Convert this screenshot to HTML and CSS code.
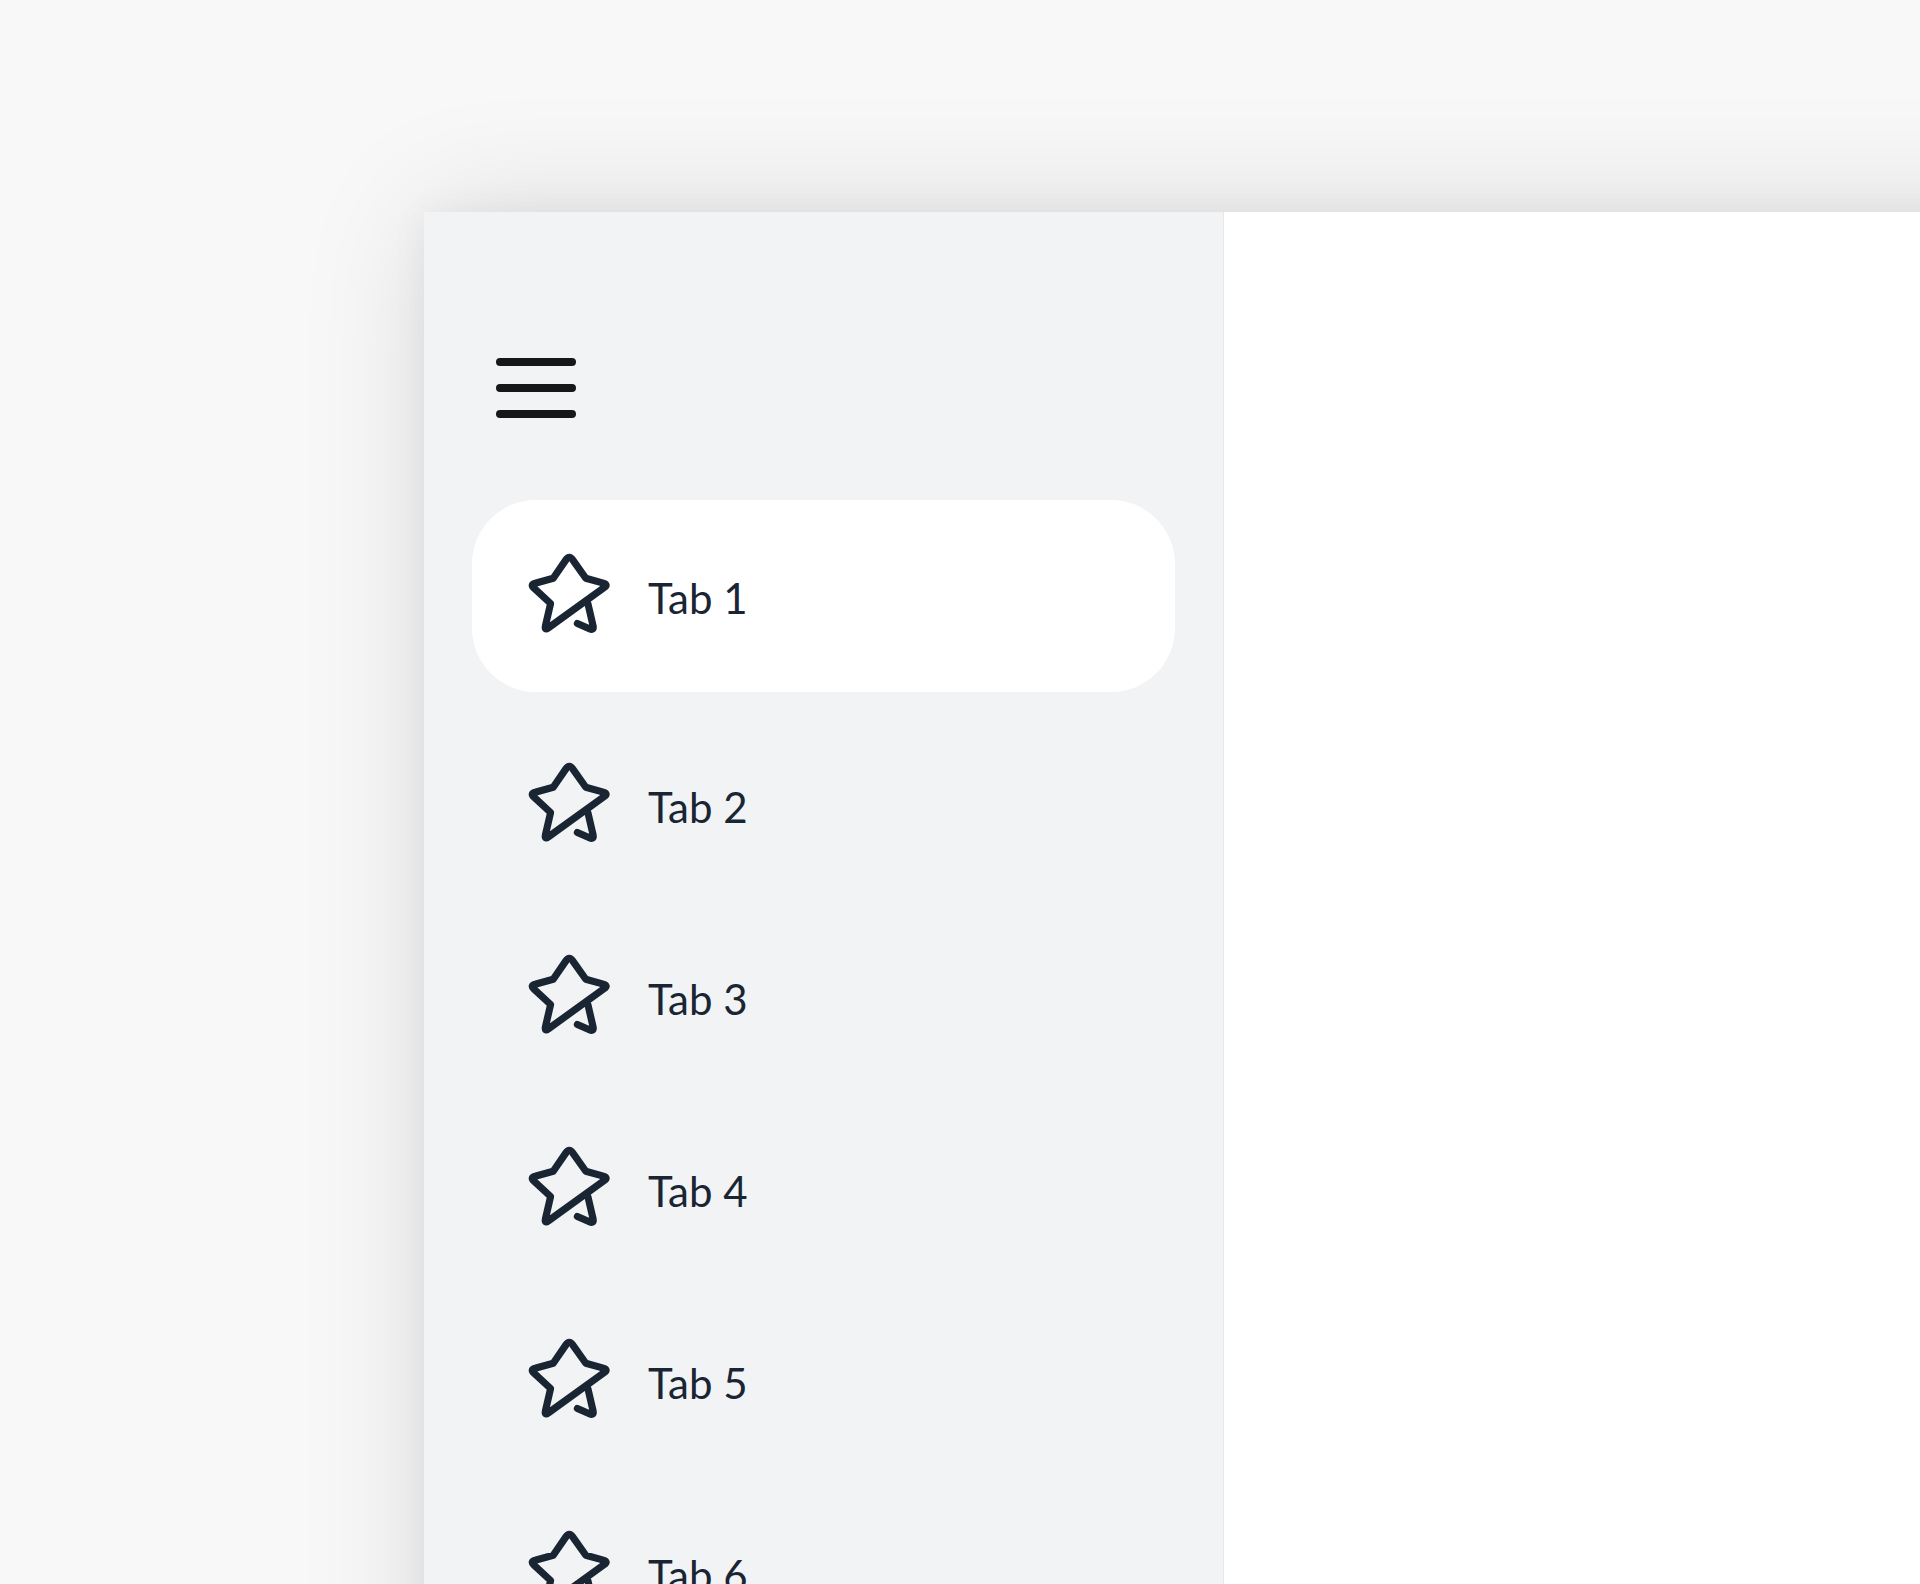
FILE: index.html
```html
<!DOCTYPE html>
<html lang="en">
<head>
<meta charset="utf-8">
<title>Tabs</title>
<link rel="stylesheet" href="styles.css">
</head>
<body>
<div class="stage">
  <div class="panel">
    <aside class="sidebar">
      <button class="menu-btn" aria-label="Menu">
        <span class="bar"></span>
        <span class="bar"></span>
        <span class="bar"></span>
      </button>
      <nav class="tabs">
        <a class="tab tab-active" href="#">
          <svg class="star" viewBox="0 0 96 96"><path transform="translate(48.3 45) scale(1.05) translate(-48.3 -45)" d="M45.2 13.2 Q48.3 8.6 51.4 13.2 L64 31 L80.7 35.6 Q85.7 37 81.4 39.9 L28.5 78.1 Q24.4 81.2 25.6 76.1 L30.5 55 L14.7 40.4 Q10.8 36.9 15.8 35.7 L33 31 Z M66 55 L70.9 76.1 Q72.1 81.2 67.4 79 L56 74"/></svg>
          <span class="label">Tab 1</span>
        </a>
        <a class="tab" href="#">
          <svg class="star" viewBox="0 0 96 96"><path transform="translate(48.3 45) scale(1.05) translate(-48.3 -45)" d="M45.2 13.2 Q48.3 8.6 51.4 13.2 L64 31 L80.7 35.6 Q85.7 37 81.4 39.9 L28.5 78.1 Q24.4 81.2 25.6 76.1 L30.5 55 L14.7 40.4 Q10.8 36.9 15.8 35.7 L33 31 Z M66 55 L70.9 76.1 Q72.1 81.2 67.4 79 L56 74"/></svg>
          <span class="label">Tab 2</span>
        </a>
        <a class="tab" href="#">
          <svg class="star" viewBox="0 0 96 96"><path transform="translate(48.3 45) scale(1.05) translate(-48.3 -45)" d="M45.2 13.2 Q48.3 8.6 51.4 13.2 L64 31 L80.7 35.6 Q85.7 37 81.4 39.9 L28.5 78.1 Q24.4 81.2 25.6 76.1 L30.5 55 L14.7 40.4 Q10.8 36.9 15.8 35.7 L33 31 Z M66 55 L70.9 76.1 Q72.1 81.2 67.4 79 L56 74"/></svg>
          <span class="label">Tab 3</span>
        </a>
        <a class="tab" href="#">
          <svg class="star" viewBox="0 0 96 96"><path transform="translate(48.3 45) scale(1.05) translate(-48.3 -45)" d="M45.2 13.2 Q48.3 8.6 51.4 13.2 L64 31 L80.7 35.6 Q85.7 37 81.4 39.9 L28.5 78.1 Q24.4 81.2 25.6 76.1 L30.5 55 L14.7 40.4 Q10.8 36.9 15.8 35.7 L33 31 Z M66 55 L70.9 76.1 Q72.1 81.2 67.4 79 L56 74"/></svg>
          <span class="label">Tab 4</span>
        </a>
        <a class="tab" href="#">
          <svg class="star" viewBox="0 0 96 96"><path transform="translate(48.3 45) scale(1.05) translate(-48.3 -45)" d="M45.2 13.2 Q48.3 8.6 51.4 13.2 L64 31 L80.7 35.6 Q85.7 37 81.4 39.9 L28.5 78.1 Q24.4 81.2 25.6 76.1 L30.5 55 L14.7 40.4 Q10.8 36.9 15.8 35.7 L33 31 Z M66 55 L70.9 76.1 Q72.1 81.2 67.4 79 L56 74"/></svg>
          <span class="label">Tab 5</span>
        </a>
        <a class="tab" href="#">
          <svg class="star" viewBox="0 0 96 96"><path transform="translate(48.3 45) scale(1.05) translate(-48.3 -45)" d="M45.2 13.2 Q48.3 8.6 51.4 13.2 L64 31 L80.7 35.6 Q85.7 37 81.4 39.9 L28.5 78.1 Q24.4 81.2 25.6 76.1 L30.5 55 L14.7 40.4 Q10.8 36.9 15.8 35.7 L33 31 Z M66 55 L70.9 76.1 Q72.1 81.2 67.4 79 L56 74"/></svg>
          <span class="label">Tab 6</span>
        </a>
      </nav>
    </aside>
    <main class="content"></main>
  </div>
</div>
</body>
</html>
```
FILE: styles.css
```css
html, body {
  margin: 0;
  padding: 0;
}
body {
  width: 1920px;
  height: 1584px;
  overflow: hidden;
  background: #f8f8f8;
  font-family: Lato, "Noto Sans", sans-serif;
}
.stage {
  padding: 212px 0 0 424px;
}
.panel {
  display: flex;
  width: 1700px;
  height: 1600px;
  background: #ffffff;
  box-shadow: 0 0 120px rgba(0, 0, 0, 0.12), 0 0 36px rgba(0, 0, 0, 0.05);
}
.sidebar {
  box-sizing: border-box;
  width: 800px;
  flex: none;
  background: #f2f3f5;
  border-right: 1px solid #e6e7e9;
  padding: 146px 48px 0 48px;
}
.menu-btn {
  display: flex;
  flex-direction: column;
  gap: 18px;
  width: 80px;
  padding: 0;
  margin: 0 0 82px 24px;
  border: 0;
  background: transparent;
}
.bar {
  display: block;
  width: 80px;
  height: 8px;
  border-radius: 4px;
  background: #171717;
}
.tabs {
  display: flex;
  flex-direction: column;
}
.tab {
  display: flex;
  align-items: center;
  gap: 31px;
  height: 192px;
  padding-left: 49px;
  border-radius: 64px;
  text-decoration: none;
  color: #1a2533;
}
.tab-active {
  background: #ffffff;
  margin-bottom: 17px;
}
.star {
  width: 96px;
  height: 96px;
  flex: none;
  fill: none;
  stroke: #1a2533;
  stroke-width: 6.8;
  stroke-linejoin: round;
  stroke-linecap: round;
}
.label {
  font-size: 42px;
  font-weight: 400;
  line-height: 1;
  margin-top: 4px;
}
.content {
  flex: 1;
  background: #ffffff;
}
```
